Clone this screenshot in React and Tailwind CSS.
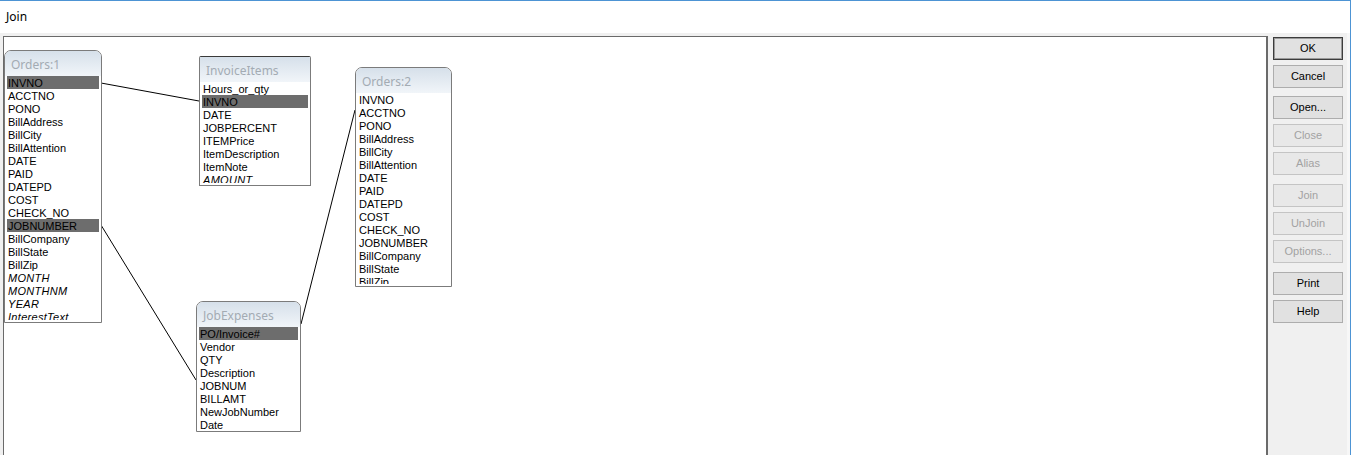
import React from "react";

const ROW = "h-[13px] leading-[14px] text-[11px] whitespace-nowrap pl-[1px] pr-[1px]";

function Node({ title, fields, left, top, width, height, square }) {
  return (
    <div
      className={`absolute bg-white border border-[#7b7b7b] overflow-hidden flex flex-col ${square ? "rounded-t-[2px] border-t-[#3a3a3a]" : "rounded-t-[7px]"}`}
      style={{ left, top, width, height }}
    >
      <div className="h-[25px] shrink-0 bg-gradient-to-b from-[#d6e0ea] to-[#f1f5f9] pl-[6px] pt-[6px] text-[12px] leading-[16px] text-[#a3abb3] font-['Noto_Sans',sans-serif]">
        {title}
      </div>
      <div className="flex-1 min-h-0 overflow-hidden mb-[2px] px-[2px] font-['Liberation_Sans',Arial,sans-serif] text-black">
        {fields.map((f, i) => (
          <div
            key={i}
            className={`${ROW} ${f.hl ? "bg-[#6d6d6d]" : ""} ${f.it ? "italic tracking-[0.3px]" : ""}`}
          >
            {f.n}
          </div>
        ))}
      </div>
    </div>
  );
}

const F = (n, o = {}) => ({ n, ...o });

const orders1 = [
  F("INVNO", { hl: true }), F("ACCTNO"), F("PONO"), F("BillAddress"), F("BillCity"),
  F("BillAttention"), F("DATE"), F("PAID"), F("DATEPD"), F("COST"), F("CHECK_NO"),
  F("JOBNUMBER", { hl: true }), F("BillCompany"), F("BillState"), F("BillZip"),
  F("MONTH", { it: true }), F("MONTHNM", { it: true }), F("YEAR", { it: true }),
  F("InterestText", { it: true }),
];

const invoice = [
  F("Hours_or_qty"), F("INVNO", { hl: true }), F("DATE"), F("JOBPERCENT"), F("ITEMPrice"),
  F("ItemDescription"), F("ItemNote"), F("AMOUNT", { it: true }),
];

const orders2 = [
  F("INVNO"), F("ACCTNO"), F("PONO"), F("BillAddress"), F("BillCity"), F("BillAttention"),
  F("DATE"), F("PAID"), F("DATEPD"), F("COST"), F("CHECK_NO"), F("JOBNUMBER"),
  F("BillCompany"), F("BillState"), F("BillZip"),
];

const jobexp = [
  F("PO/Invoice#", { hl: true }), F("Vendor"), F("QTY"), F("Description"), F("JOBNUM"),
  F("BILLAMT"), F("NewJobNumber"), F("Date"),
];

function Btn({ label, disabled, def, mt = "mt-[5px]" }) {
  return (
    <div
      className={`${mt} h-[23px] w-[70px] flex items-center justify-center text-[11px] font-['Liberation_Sans',Arial,sans-serif] border ${
        def
          ? "border-[#3c3c3c] bg-[#e1e1e1] text-black shadow-[inset_0_0_0_1px_#9a9a9a]"
          : disabled
          ? "border-[#c4c4c4] bg-[#e8e8e8] text-[#a2a2a2]"
          : "border-[#adadad] bg-[#e1e1e1] text-black"
      }`}
    >
      {label}
    </div>
  );
}

export default function App() {
  return (
    <div className="w-[1351px] h-[455px] overflow-hidden border-t border-r border-[#4d94d4] flex flex-col bg-[#f0f0f0]">
      <div className="h-[32px] shrink-0 bg-white pl-[6px] pt-[8px] text-[12px] leading-[16px] text-black font-['Noto_Sans',sans-serif]">
        Join
      </div>
      <div className="flex flex-1 min-h-0 border-r-[3px] border-[#f7f7f7]">
        <div className="relative ml-[3px] mt-[3px] w-[1265px] h-[440px] shrink-0 bg-white border-l border-t border-r-2 border-[#6a6a6a]">
          <svg className="absolute left-0 top-0" width="1262" height="420">
            <line x1="97" y1="46" x2="195" y2="64" stroke="#000" strokeWidth="1" />
            <line x1="97" y1="188" x2="192" y2="343" stroke="#000" strokeWidth="1" />
            <line x1="297" y1="287" x2="351" y2="73" stroke="#000" strokeWidth="1" />
          </svg>
          <Node title="Orders:1" fields={orders1} left={0} top={13} width={98} height={273} />
          <Node title="InvoiceItems" fields={invoice} left={195} top={19} width={112} height={130} square />
          <Node title="Orders:2" fields={orders2} left={351} top={30} width={97} height={220} />
          <Node title="JobExpenses" fields={jobexp} left={192} top={264} width={105} height={131} />
        </div>
        <div className="ml-[5px] flex flex-col">
          <Btn label="OK" def mt="mt-[4px]" />
          <Btn label="Cancel" />
          <Btn label="Open..." mt="mt-[8px]" />
          <Btn label="Close" disabled />
          <Btn label="Alias" disabled />
          <Btn label="Join" disabled mt="mt-[9px]" />
          <Btn label="UnJoin" disabled />
          <Btn label="Options..." disabled />
          <Btn label="Print" mt="mt-[9px]" />
          <Btn label="Help" />
        </div>
      </div>
    </div>
  );
}
